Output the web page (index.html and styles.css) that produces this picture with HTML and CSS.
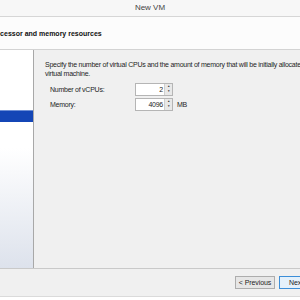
FILE: index.html
```html
<!DOCTYPE html>
<html lang="en">
<head>
  <meta charset="UTF-8" />
  <title>New VM</title>
  <link rel="stylesheet" href="styles.css">
</head>
<body>
  <div class="window">
    <div class="titlebar">New VM</div>

    <div class="header">
      <h1>Specify processor and memory resources</h1>
    </div>

    <div class="main">
      <div class="nav">
        <div class="nav-item selected"></div>
      </div>

      <div class="content">
        <p class="intro">Specify the number of virtual CPUs and the amount of memory that will be initially allocated to this<br>virtual machine.</p>

        <div class="field">
          <label>Number of vCPUs:</label>
          <div class="spin">
            <span class="spin-value">2</span>
            <span class="spin-arrows"><i>&#9650;</i><i>&#9660;</i></span>
          </div>
        </div>

        <div class="field">
          <label>Memory:</label>
          <div class="spin">
            <span class="spin-value">4096</span>
            <span class="spin-arrows"><i>&#9650;</i><i>&#9660;</i></span>
          </div>
          <span class="unit">MB</span>
        </div>
      </div>
    </div>

    <div class="buttons">
      <button class="btn">&lt; Previous</button>
      <button class="btn primary">Next &gt;</button>
    </div>
  </div>
</body>
</html>
```

FILE: styles.css
```css
body {
  margin: 0;
  font-family: "Liberation Sans", Arial, sans-serif;
  font-size: 7px;
  letter-spacing: -0.25px;
  color: #1e1e1e;
  background-color: #ffffff;
  overflow: hidden;
}

.window {
  width: 300px;
  height: 300px;
  display: flex;
  flex-direction: column;
}

.titlebar {
  height: 16px;
  line-height: 16px;
  text-align: center;
  font-size: 8px;
  letter-spacing: 0;
  color: #444444;
  background-color: #f7f7f7;
  border-bottom: 1px solid #d6d6d6;
}

.header {
  height: 32px;
  background-color: #fcfcfc;
  border-bottom: 1px solid #d3d3d3;
  display: flex;
  align-items: center;
}

.header h1 {
  margin: 0 0 0 -38px;
  font-size: 7px;
  letter-spacing: 0;
  font-weight: bold;
  color: #101010;
  white-space: nowrap;
}

/* === Body === */
.main {
  height: 218px;
  display: flex;
  background-color: #f0f0f0;
  border-bottom: 1px solid #c9c9c9;
}

.nav {
  width: 33px;
  border-right: 1px solid #a8a8a8;
  background: linear-gradient(#ffffff 0%, #ffffff 45%, #dde2ec 100%);
  padding-top: 60px;
}

.nav-item.selected {
  height: 11px;
  background-color: #1446b6;
  border-top: 1px solid #6d8fd6;
}

.content {
  flex: 1;
  padding: 10px 0 0 11px;
  white-space: nowrap;
  overflow: hidden;
}

.intro {
  margin: 0 0 5px 0;
  line-height: 9px;
}

.field {
  display: flex;
  align-items: center;
  height: 12px;
  margin-bottom: 3px;
}

.field label {
  width: 85px;
  padding-left: 5px;
}

.spin {
  display: flex;
  width: 36px;
  height: 11px;
  border: 1px solid #b5b5b5;
  background-color: #ffffff;
}

.spin-value {
  flex: 1;
  text-align: right;
  line-height: 11px;
  padding-right: 1px;
}

.spin-arrows {
  width: 7px;
  display: flex;
  flex-direction: column;
  border-left: 1px solid #cfcfcf;
  background-color: #e8e8e8;
}

.spin-arrows i {
  flex: 1;
  font-style: normal;
  font-size: 3px;
  line-height: 5px;
  text-align: center;
  color: #333333;
}

.unit {
  margin-left: 4px;
}

/* === Buttons === */
.buttons {
  height: 28px;
  background-color: #f0f0f0;
  border-bottom: 1px solid #dadada;
  display: flex;
  align-items: flex-start;
  padding: 7px 0 0 235px;
  box-sizing: border-box;
}

.btn {
  width: 40px;
  height: 13px;
  padding: 0;
  font-family: inherit;
  font-size: 7px;
  letter-spacing: -0.1px;
  white-space: nowrap;
  color: #1e1e1e;
  background-color: #e6e6e6;
  border: 1px solid #adadad;
  margin-right: 4px;
  flex-shrink: 0;
}

.btn.primary {
  border-color: #3c8ed8;
  background-color: #e5f1fb;
}
```
